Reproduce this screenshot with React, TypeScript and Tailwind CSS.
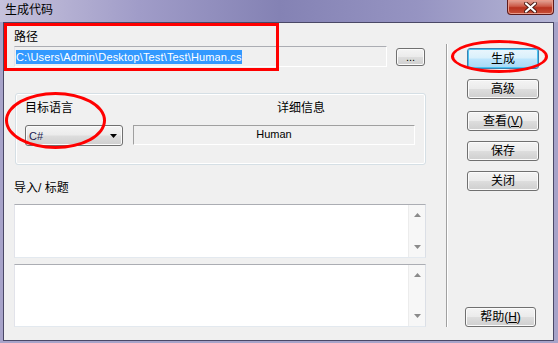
import React from 'react';

const cjk = "font-['Liberation_Sans','Noto_Sans_CJK_SC',sans-serif]";

const btnBase = 'flex items-center rounded-[3px] border text-[12px] leading-[14px] text-black';
const btnNormal =
  'border-[#707070] bg-[linear-gradient(180deg,#f4f4f4_0%,#ebebeb_48%,#dddddd_52%,#cfcfcf_100%)] shadow-[inset_0_0_0_1px_#fbfbfb]';
const btnFocused =
  'border-[#3c7fb1] bg-[linear-gradient(180deg,#eaf6fd_0%,#d9f0fc_48%,#bee6fd_52%,#a7d9f5_100%)] shadow-[inset_0_0_0_1px_#48c3f0]';

function Button({
  label,
  className = '',
  focused = false,
}: {
  label: React.ReactNode;
  className?: string;
  focused?: boolean;
}) {
  return (
    <div className={`${btnBase} justify-center ${focused ? btnFocused : btnNormal} ${className}`}>
      {label}
    </div>
  );
}

function ScrollArea({ className = '' }: { className?: string }) {
  return (
    <div
      className={`flex w-[412px] border border-t-[#abadb3] border-l-[#e2e3ea] border-r-[#dbdfe6] border-b-[#e3e9ef] bg-white ${className}`}
    >
      <div className="flex-1" />
      <div className="flex w-[17px] flex-col items-center justify-between border-l border-[#ececec] bg-[#f7f7f7] py-[8px]">
        <svg width="7" height="4" viewBox="0 0 7 4">
          <path d="M0 4 L3.5 0 L7 4 Z" fill="#8a8a8a" />
        </svg>
        <svg width="7" height="4" viewBox="0 0 7 4">
          <path d="M0 0 L7 0 L3.5 4 Z" fill="#8a8a8a" />
        </svg>
      </div>
    </div>
  );
}

export default function App() {
  return (
    <div className={`relative flex h-[343px] w-[558px] flex-col overflow-hidden bg-[#a7a3c9] ${cjk}`}>
      {/* title bar */}
      <div className="relative h-[22px] bg-[linear-gradient(90deg,#c6c2dc_0%,#a09cc8_25%,#8482b4_50%,#9694c2_75%,#b6b6d6_100%)]">
        <div className="pl-[5px] pt-[3px] text-[12px] leading-[14px] text-black">生成代码</div>
        <div className="absolute right-[4px] top-0 flex h-[15px] w-[47px] items-center justify-center rounded-b-[4px] border border-t-0 border-[#5e1b1b] bg-[linear-gradient(180deg,#e4a89b_0%,#cc5a48_45%,#b8321f_55%,#c7503a_100%)] shadow-[inset_0_0_0_1px_#e99a8a]">
          <svg width="13" height="11" viewBox="0 0 13 11">
            <path d="M2 1.5 L11 9.5 M11 1.5 L2 9.5" stroke="#4a1a14" strokeWidth="4" strokeLinecap="round" />
            <path d="M2 1.5 L11 9.5 M11 1.5 L2 9.5" stroke="#ffffff" strokeWidth="2.2" strokeLinecap="round" />
          </svg>
        </div>
      </div>

      {/* client area */}
      <div className="mb-[2px] ml-[3px] mr-[4px] flex flex-1 border border-[#4a4866] bg-[#f0f0f0]">
        {/* left column */}
        <div className="flex w-[422px] flex-col pl-[10px] pt-[7px]">
          <div className="h-[14px] text-[12px] leading-[14px]">路径</div>
          <div className="mt-[2px] flex items-start">
            <div className="flex h-[21px] w-[373px] items-center border border-t-[#abadb3] border-l-[#e2e3ea] border-r-white border-b-white pl-[1px]">
              <span className="bg-[#3399ff] text-[11px] leading-[14px] tracking-[0.15px] text-white">
                C:\Users\Admin\Desktop\Test\Test\Human.cs
              </span>
            </div>
            <Button
              label={<span className="text-[11px] leading-[11px]">...</span>}
              className="ml-[9px] mt-[2px] h-[18px] w-[29px]"
            />
          </div>

          {/* group box */}
          <div className="ml-[1px] mt-[26px] h-[72px] w-[411px] rounded-[3px] border border-[#d5dfe5] pl-[9px] pt-[7px] shadow-[inset_0_0_0_1px_#ffffff]">
            <div className="flex h-[14px] text-[12px] leading-[14px]">
              <span>目标语言</span>
              <span className="ml-[204px]">详细信息</span>
            </div>
            <div className="mt-[10px] flex items-start">
              <div className={`${btnBase} ${btnNormal} h-[21px] w-[98px] justify-between pl-[3px] pr-[5px]`}>
                <span className="text-[11px] leading-[14px] text-[#1a1a50]">C#</span>
                <svg width="7" height="4" viewBox="0 0 7 4">
                  <path d="M0 0 L7 0 L3.5 4 Z" fill="#000" />
                </svg>
              </div>
              <div className="ml-[10px] flex h-[20px] w-[282px] items-start justify-center border border-t-[#a0a0a0] border-l-[#a0a0a0] border-r-white border-b-white pt-[1px]">
                <span className="text-[11px] leading-[14px] text-black">Human</span>
              </div>
            </div>
          </div>

          <div className="mt-[16px] h-[14px] text-[12px] leading-[14px]">导入/ 标题</div>
          <ScrollArea className="mt-[9px] h-[54px]" />
          <ScrollArea className="mt-[6px] h-[63px]" />
        </div>

        {/* separator */}
        <div className="ml-[20px] mt-[21px] h-[283px] w-[2px] border-l border-r border-l-[#a0a0a0] border-r-white" />

        {/* right column */}
        <div className="ml-[19px] flex flex-col pb-[13px] pt-[25px]">
          <Button label="生成" focused className="h-[21px] w-[72px]" />
          <Button label="高级" className="mt-[10px] h-[20px] w-[72px]" />
          <Button
            label={
              <>
                查看(<u>V</u>)
              </>
            }
            className="mt-[12px] h-[20px] w-[72px]"
          />
          <Button label="保存" className="mt-[10px] h-[20px] w-[72px]" />
          <Button label="关闭" className="mt-[10px] h-[20px] w-[72px]" />
          <Button
            label={
              <>
                帮助(<u>H</u>)
              </>
            }
            className="-ml-[2px] mt-auto h-[20px] w-[71px]"
          />
        </div>
      </div>

      {/* red annotations */}
      <div className="pointer-events-none absolute left-[4px] top-[23px] h-[48px] w-[275px] border-[3px] border-[#ff0000]" />
      <div className="pointer-events-none absolute left-[5px] top-[92px] h-[57px] w-[101px] rounded-[50%] border-[3px] border-[#ff0000]" />
      <div className="pointer-events-none absolute left-[451px] top-[40px] h-[33px] w-[97px] rounded-[50%] border-[3px] border-[#ff0000]" />
    </div>
  );
}
